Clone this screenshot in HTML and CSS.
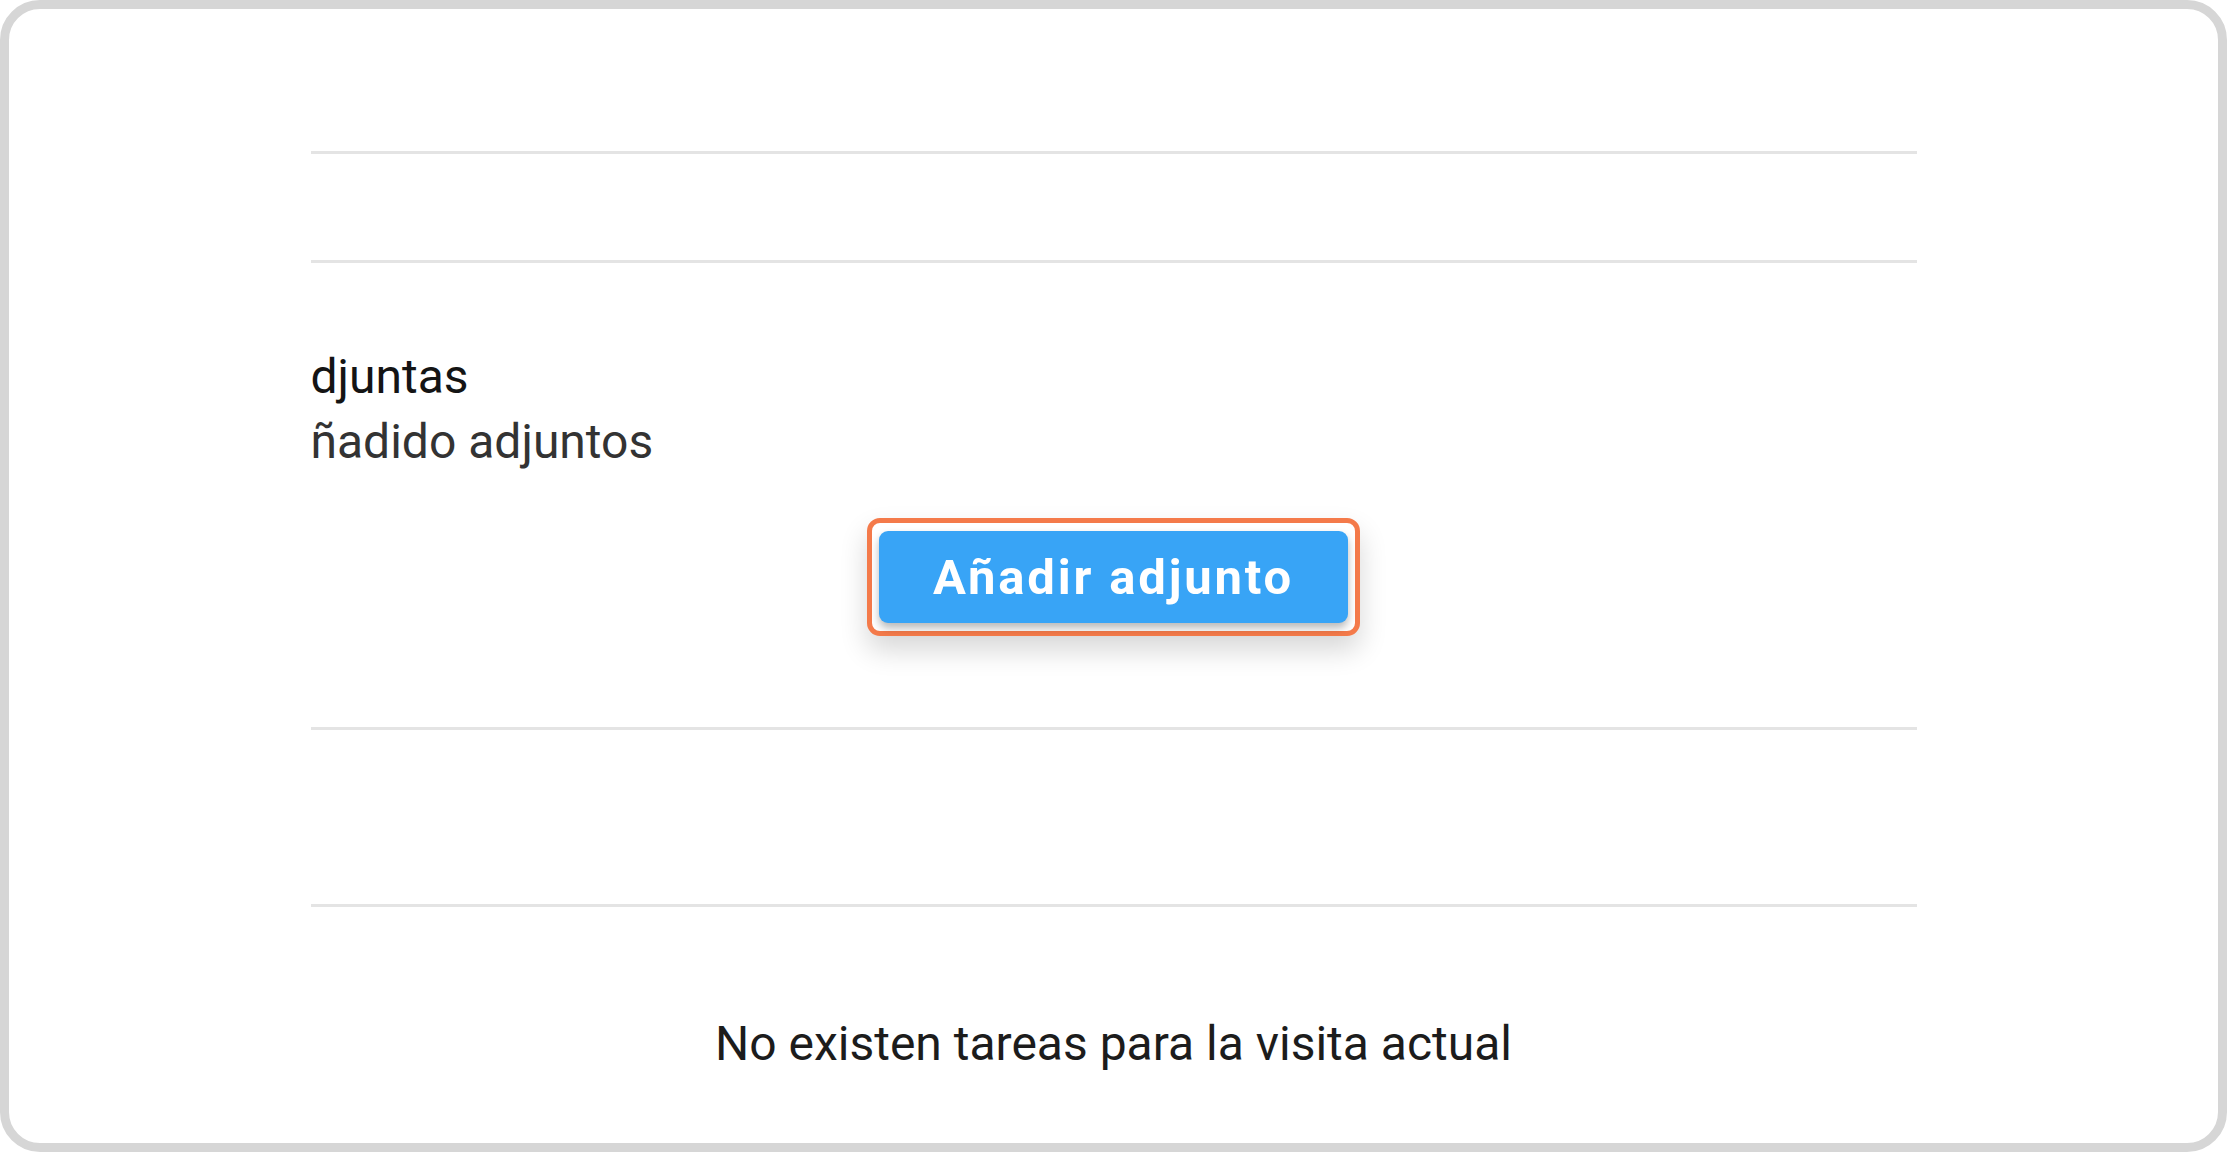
FILE: index.html
```html
<!DOCTYPE html>
<html lang="es">
<head>
    <meta charset="UTF-8">
    <meta name="viewport" content="width=device-width, initial-scale=1.0">
    <title>Visita - Adjuntos</title>
    <link rel="stylesheet" href="styles.css">
</head>
<body>

    <div class="frame">
        <div class="panel">
            <div class="row row-short"></div>

            <div class="row attachments">
                <div class="attach-title">djuntas</div>
                <div class="attach-empty">ñadido adjuntos</div>
                <div class="button-area">
                    <div class="highlight">
                        <button class="add-btn">Añadir adjunto</button>
                    </div>
                </div>
            </div>

            <div class="row row-mid"></div>

            <div class="row tasks">No existen tareas para la visita actual</div>
        </div>
    </div>

</body>
</html>
```

FILE: styles.css
```css
/* General Styles */
body {
    margin: 0;
    background: #ffffff;
    font-family: 'Roboto', 'Liberation Sans', sans-serif;
    color: #222;
}

.frame {
    height: 100vh;
    box-sizing: border-box;
    border: 9px solid #d6d6d6;
    border-radius: 40px;
    overflow: hidden;
    background: #fff;
}

.panel {
    width: 1606px;
    margin: 0 auto;
    padding-top: 142px;
}

.row {
    border-top: 3px solid #e4e4e4;
}

.row-short {
    height: 106px;
}

.row-mid {
    height: 174px;
}

/* Attachments block */
.attachments {
    height: 467px;
    box-sizing: border-box;
    padding-top: 81px;
    overflow: hidden;
}

.attach-title,
.attach-empty {
    font-size: 48px;
    line-height: 65px;
    white-space: nowrap;
}

.attach-title {
    color: #141414;
}

.attach-empty {
    color: #333;
}

.button-area {
    display: flex;
    justify-content: center;
    margin-top: 44px;
}

.highlight {
    border: 5px solid #f47a4a;
    border-radius: 13px;
    padding: 8px 7px;
    background: #fff;
    box-shadow: 0 14px 28px rgba(0, 0, 0, 0.16);
}

.add-btn {
    display: block;
    width: 469px;
    height: 92px;
    border: none;
    border-radius: 9px;
    background: #38a4f6;
    color: #fff;
    font-family: 'Roboto', 'Liberation Sans', sans-serif;
    font-size: 49px;
    font-weight: 700;
    letter-spacing: 2.8px;
    cursor: pointer;
    box-shadow: 0 5px 8px rgba(0, 0, 0, 0.28);
}

/* Tasks block */
.tasks {
    padding-top: 109px;
    font-size: 48px;
    line-height: 56px;
    text-align: center;
    white-space: nowrap;
    color: #1c1c1c;
}
```
